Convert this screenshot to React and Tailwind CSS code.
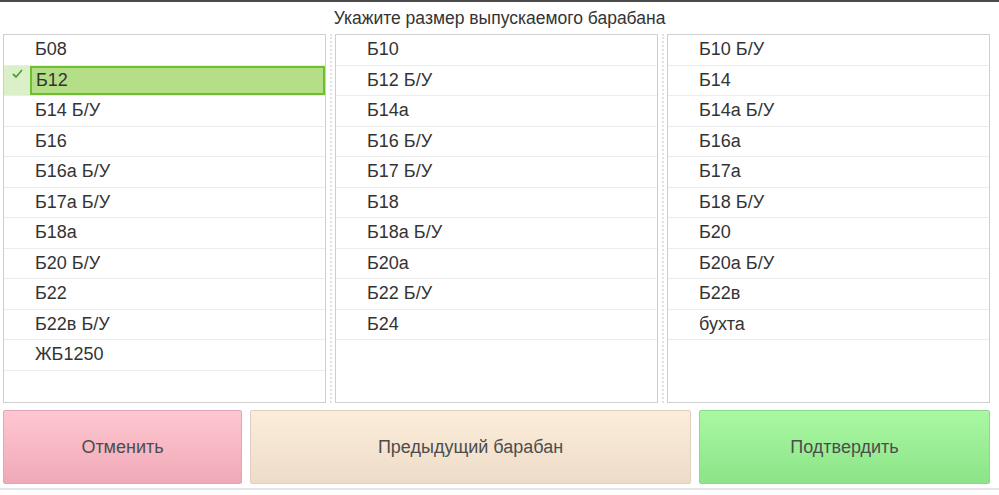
const col1 = ["Б08", "Б12", "Б14 Б/У", "Б16", "Б16а Б/У", "Б17а Б/У", "Б18а", "Б20 Б/У", "Б22", "Б22в Б/У", "ЖБ1250"];
const col2 = ["Б10", "Б12 Б/У", "Б14а", "Б16 Б/У", "Б17 Б/У", "Б18", "Б18а Б/У", "Б20а", "Б22 Б/У", "Б24"];
const col3 = ["Б10 Б/У", "Б14", "Б14а Б/У", "Б16а", "Б17а", "Б18 Б/У", "Б20", "Б20а Б/У", "Б22в", "бухта"];

function Row({ label, selected }) {
  if (selected) {
    return (
      <div className="flex h-[30.5px] border-b border-[#ececec]">
        <div className="w-[26px] shrink-0 bg-[#dbefc9] relative">
          <svg className="absolute left-[8px] top-[3px]" width="11" height="9" viewBox="0 0 11 9">
            <path d="M1 5 L4 8 L10 1" fill="none" stroke="#4aa832" strokeWidth="1.8" />
          </svg>
        </div>
        <div className="flex-1 flex items-center bg-[#b4de88] border-2 border-[#6fbe2c] pl-[4px]">{label}</div>
      </div>
    );
  }
  return (
    <div className="flex items-center h-[30.5px] border-b border-[#ececec] pl-[31px]">{label}</div>
  );
}

function Panel({ items, selected }) {
  return (
    <div className="w-[323px] h-[369px] border border-[#cfcfcf] bg-white text-[18px] text-[#333] overflow-hidden">
      {items.map((it) => (
        <Row key={it} label={it} selected={it === selected} />
      ))}
    </div>
  );
}

function Sep() {
  return (
    <div className="w-[9px] flex justify-center">
      <div className="h-[369px] border-l-2 border-dotted border-[#e2e2e2]" />
    </div>
  );
}

export default function App() {
  return (
    <div className="w-[999px] h-[495px] bg-white border-t-2 border-[#4a4a4a] font-['Liberation_Sans',Arial,sans-serif] overflow-hidden">
      <div className="h-[32px] flex items-center justify-center text-[17.5px] text-[#333]">
        Укажите размер выпускаемого барабана
      </div>
      <div className="flex pl-[3px]">
        <Panel items={col1} selected="Б12" />
        <Sep />
        <Panel items={col2} />
        <Sep />
        <Panel items={col3} />
      </div>
      <div className="flex pl-[3px] gap-[8px] mt-[7px] h-[74px] text-[18px] text-[#4d4d4d]">
        <button className="w-[239px] rounded-[2px] border border-[#e0a6b2] bg-gradient-to-b from-[#ffc7d1] to-[#efa9b7] flex items-center justify-center">
          Отменить
        </button>
        <button className="w-[441px] rounded-[2px] border border-[#ddd0c0] bg-gradient-to-b from-[#fcedda] to-[#ecdcc8] flex items-center justify-center">
          Предыдущий барабан
        </button>
        <button className="w-[291px] rounded-[2px] border border-[#8ed88a] bg-gradient-to-b from-[#aaf8a3] to-[#8be487] flex items-center justify-center">
          Подтвердить
        </button>
      </div>
      <div className="mt-[4px] h-[2px] bg-[#e6e6e6]" />
    </div>
  );
}
